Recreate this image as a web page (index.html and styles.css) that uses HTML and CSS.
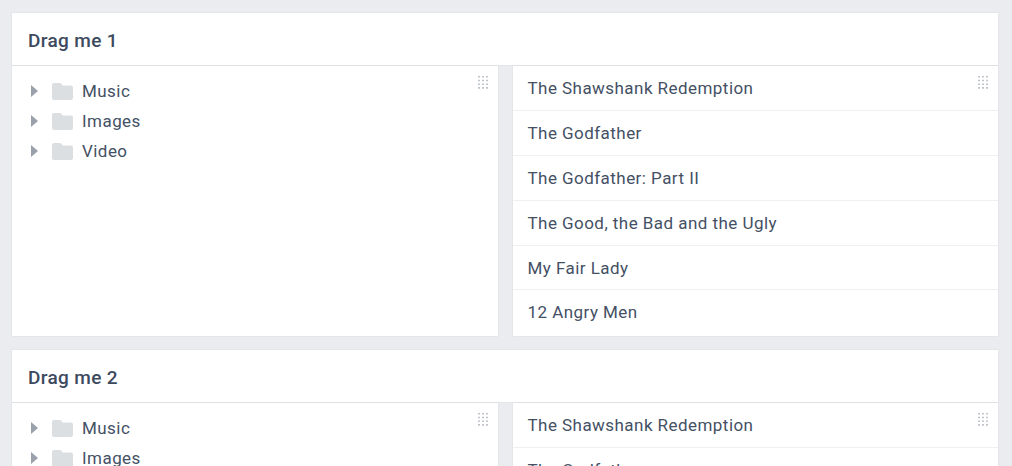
FILE: index.html
```html
<!DOCTYPE html>
<html lang="en">
<head>
  <meta charset="UTF-8">
  <meta name="viewport" content="width=device-width, initial-scale=1.0">
  <title>Drag me</title>
  <link rel="stylesheet" href="styles.css">
</head>
<body>

  <svg class="sprites" width="0" height="0">
    <symbol id="arrow" viewBox="0 0 7 12"><path d="M0 0 L7 6 L0 12 Z"/></symbol>
    <symbol id="folder" viewBox="0 0 21 17"><path d="M2 0 H8 Q9 0 9.5 1 L10.5 2.5 H19 Q21 2.5 21 4.5 V15 Q21 17 19 17 H2 Q0 17 0 15 V2 Q0 0 2 0 Z"/></symbol>
    <symbol id="handle" viewBox="0 0 10 13">
      <path d="M0 0h2v1.6h-2zM4 0h2v1.6h-2zM8 0h2v1.6h-2zM0 3.7h2v1.6h-2zM4 3.7h2v1.6h-2zM8 3.7h2v1.6h-2zM0 7.4h2v1.6h-2zM4 7.4h2v1.6h-2zM8 7.4h2v1.6h-2zM0 11.1h2v1.6h-2zM4 11.1h2v1.6h-2zM8 11.1h2v1.6h-2z"/>
    </symbol>
  </svg>

  <div class="card">
    <div class="card-header">Drag me 1</div>
    <div class="panels">
      <div class="panel">
        <svg class="handle"><use href="#handle"/></svg>
        <ul class="tree">
          <li><svg class="arrow"><use href="#arrow"/></svg><svg class="folder"><use href="#folder"/></svg>Music</li>
          <li><svg class="arrow"><use href="#arrow"/></svg><svg class="folder"><use href="#folder"/></svg>Images</li>
          <li><svg class="arrow"><use href="#arrow"/></svg><svg class="folder"><use href="#folder"/></svg>Video</li>
        </ul>
      </div>
      <div class="panel">
        <svg class="handle"><use href="#handle"/></svg>
        <ul class="movies">
          <li>The Shawshank Redemption</li>
          <li>The Godfather</li>
          <li>The Godfather: Part II</li>
          <li>The Good, the Bad and the Ugly</li>
          <li>My Fair Lady</li>
          <li>12 Angry Men</li>
        </ul>
      </div>
    </div>
  </div>

  <div class="card">
    <div class="card-header">Drag me 2</div>
    <div class="panels">
      <div class="panel">
        <svg class="handle"><use href="#handle"/></svg>
        <ul class="tree">
          <li><svg class="arrow"><use href="#arrow"/></svg><svg class="folder"><use href="#folder"/></svg>Music</li>
          <li><svg class="arrow"><use href="#arrow"/></svg><svg class="folder"><use href="#folder"/></svg>Images</li>
          <li><svg class="arrow"><use href="#arrow"/></svg><svg class="folder"><use href="#folder"/></svg>Video</li>
        </ul>
      </div>
      <div class="panel">
        <svg class="handle"><use href="#handle"/></svg>
        <ul class="movies">
          <li>The Shawshank Redemption</li>
          <li>The Godfather</li>
          <li>The Godfather: Part II</li>
          <li>The Good, the Bad and the Ugly</li>
          <li>My Fair Lady</li>
          <li>12 Angry Men</li>
        </ul>
      </div>
    </div>
  </div>

</body>
</html>
```

FILE: styles.css
```css
html, body {
  height: 466px;
  overflow: hidden;
}

body {
  font-family: Roboto, sans-serif;
  background-color: #ebecf0;
  color: #445064;
  margin: 0;
  padding: 13px 14px 0 12px;
  box-sizing: border-box;
}

.sprites {
  position: absolute;
}

.card {
  margin-bottom: 14px;
}

.card-header {
  background-color: #fff;
  height: 52px;
  line-height: 56px;
  padding-left: 16px;
  font-size: 19px;
  font-weight: 500;
  letter-spacing: 0.35px;
  color: #3d4a5e;
  box-shadow: 0 0 1px rgba(60, 70, 85, 0.2);
}

.panels {
  display: flex;
  gap: 15px;
  margin-top: 1px;
}

.panel {
  position: relative;
  flex: 1;
  height: 270px;
  background-color: #fff;
  box-shadow: 0 0 1px rgba(60, 70, 85, 0.2);
}

.handle {
  position: absolute;
  top: 10px;
  right: 10px;
  width: 10px;
  height: 13px;
  fill: #c0c4cb;
}

.tree {
  list-style: none;
  margin: 0;
  padding: 10px 0 0 19px;
}

.tree li {
  display: flex;
  align-items: center;
  height: 30px;
  font-size: 17px;
  letter-spacing: 0.45px;
}

.arrow {
  width: 7px;
  height: 12px;
  fill: #9aa1ac;
  margin-right: 14px;
}

.folder {
  width: 21px;
  height: 17px;
  fill: #dcdfe2;
  margin-right: 9px;
}

.movies {
  list-style: none;
  margin: 0;
  padding: 0;
}

.movies li {
  height: 44.9px;
  line-height: 44px;
  box-sizing: border-box;
  padding-left: 15px;
  font-size: 17px;
  letter-spacing: 0.45px;
  border-bottom: 1px solid #eff0f2;
}

.movies li:last-child {
  border-bottom: none;
}
```
